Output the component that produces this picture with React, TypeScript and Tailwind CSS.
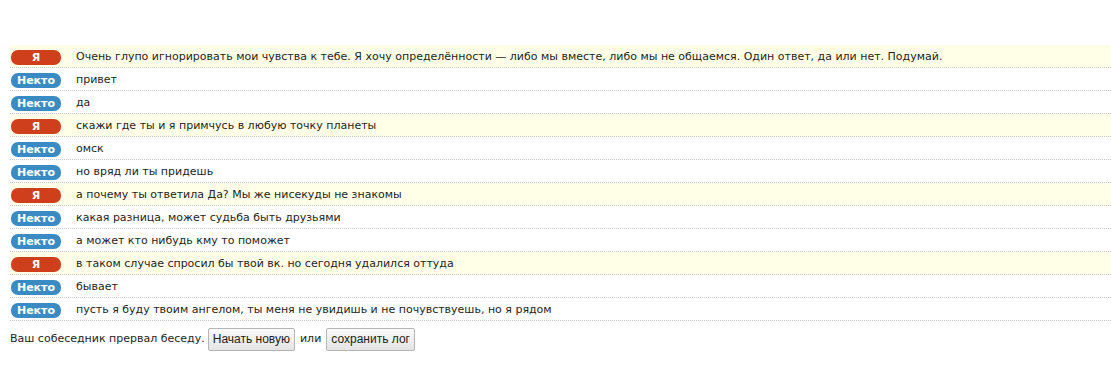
import React from "react";

type Msg = { me: boolean; text: string };

const msgs: Msg[] = [
  { me: true, text: "Очень глупо игнорировать мои чувства к тебе. Я хочу определённости — либо мы вместе, либо мы не общаемся. Один ответ, да или нет. Подумай." },
  { me: false, text: "привет" },
  { me: false, text: "да" },
  { me: true, text: "скажи где ты и я примчусь в любую точку планеты" },
  { me: false, text: "омск" },
  { me: false, text: "но вряд ли ты придешь" },
  { me: true, text: "а почему ты ответила Да? Мы же нисекуды не знакомы" },
  { me: false, text: "какая разница, может судьба быть друзьями" },
  { me: false, text: "а может кто нибудь кму то поможет" },
  { me: true, text: "в таком случае спросил бы твой вк. но сегодня удалился оттуда" },
  { me: false, text: "бывает" },
  { me: false, text: "пусть я буду твоим ангелом, ты меня не увидишь и не почувствуешь, но я рядом" },
];

export default function App() {
  return (
    <div className="w-[1111px] h-[376px] bg-white pt-[45px] pl-[10px] text-[11px] text-[#1e1e1e]" style={{ fontFamily: "Tahoma, 'DejaVu Sans', Verdana, sans-serif" }}>
      {msgs.map((m, i) => (
        <div
          key={i}
          className={`flex items-center h-[23px] pt-[2px] border-b border-dotted border-[#c8c8c8] ${m.me ? "bg-[#fffee6]" : "bg-white"}`}
        >
          <span
            className={`ml-[1px] w-[50px] h-[15px] rounded-[7px] flex items-center justify-center text-white font-bold text-[11px] leading-none ${m.me ? "bg-[#cf3f1c]" : "bg-[#3a8bc4]"}`}
          >
            {m.me ? "Я" : "Некто"}
          </span>
          <span className="ml-[15px] whitespace-nowrap">{m.text}</span>
        </div>
      ))}
      <div className="flex items-center mt-[6px] h-[24px]">
        <span>Ваш собеседник прервал беседу.</span>
        <button
          className="ml-[3px] h-[23px] px-[4px] border border-[#b5b5b5] rounded-[2px] bg-gradient-to-b from-[#fafafa] to-[#e4e4e4] text-[12px] text-[#222]"
          style={{ fontFamily: "'Liberation Sans', Arial, sans-serif" }}
        >
          Начать новую
        </button>
        <span className="mx-[5px]">или</span>
        <button
          className="h-[23px] px-[4px] border border-[#b5b5b5] rounded-[2px] bg-gradient-to-b from-[#fafafa] to-[#e4e4e4] text-[12px] text-[#222]"
          style={{ fontFamily: "'Liberation Sans', Arial, sans-serif" }}
        >
          сохранить лог
        </button>
      </div>
    </div>
  );
}
